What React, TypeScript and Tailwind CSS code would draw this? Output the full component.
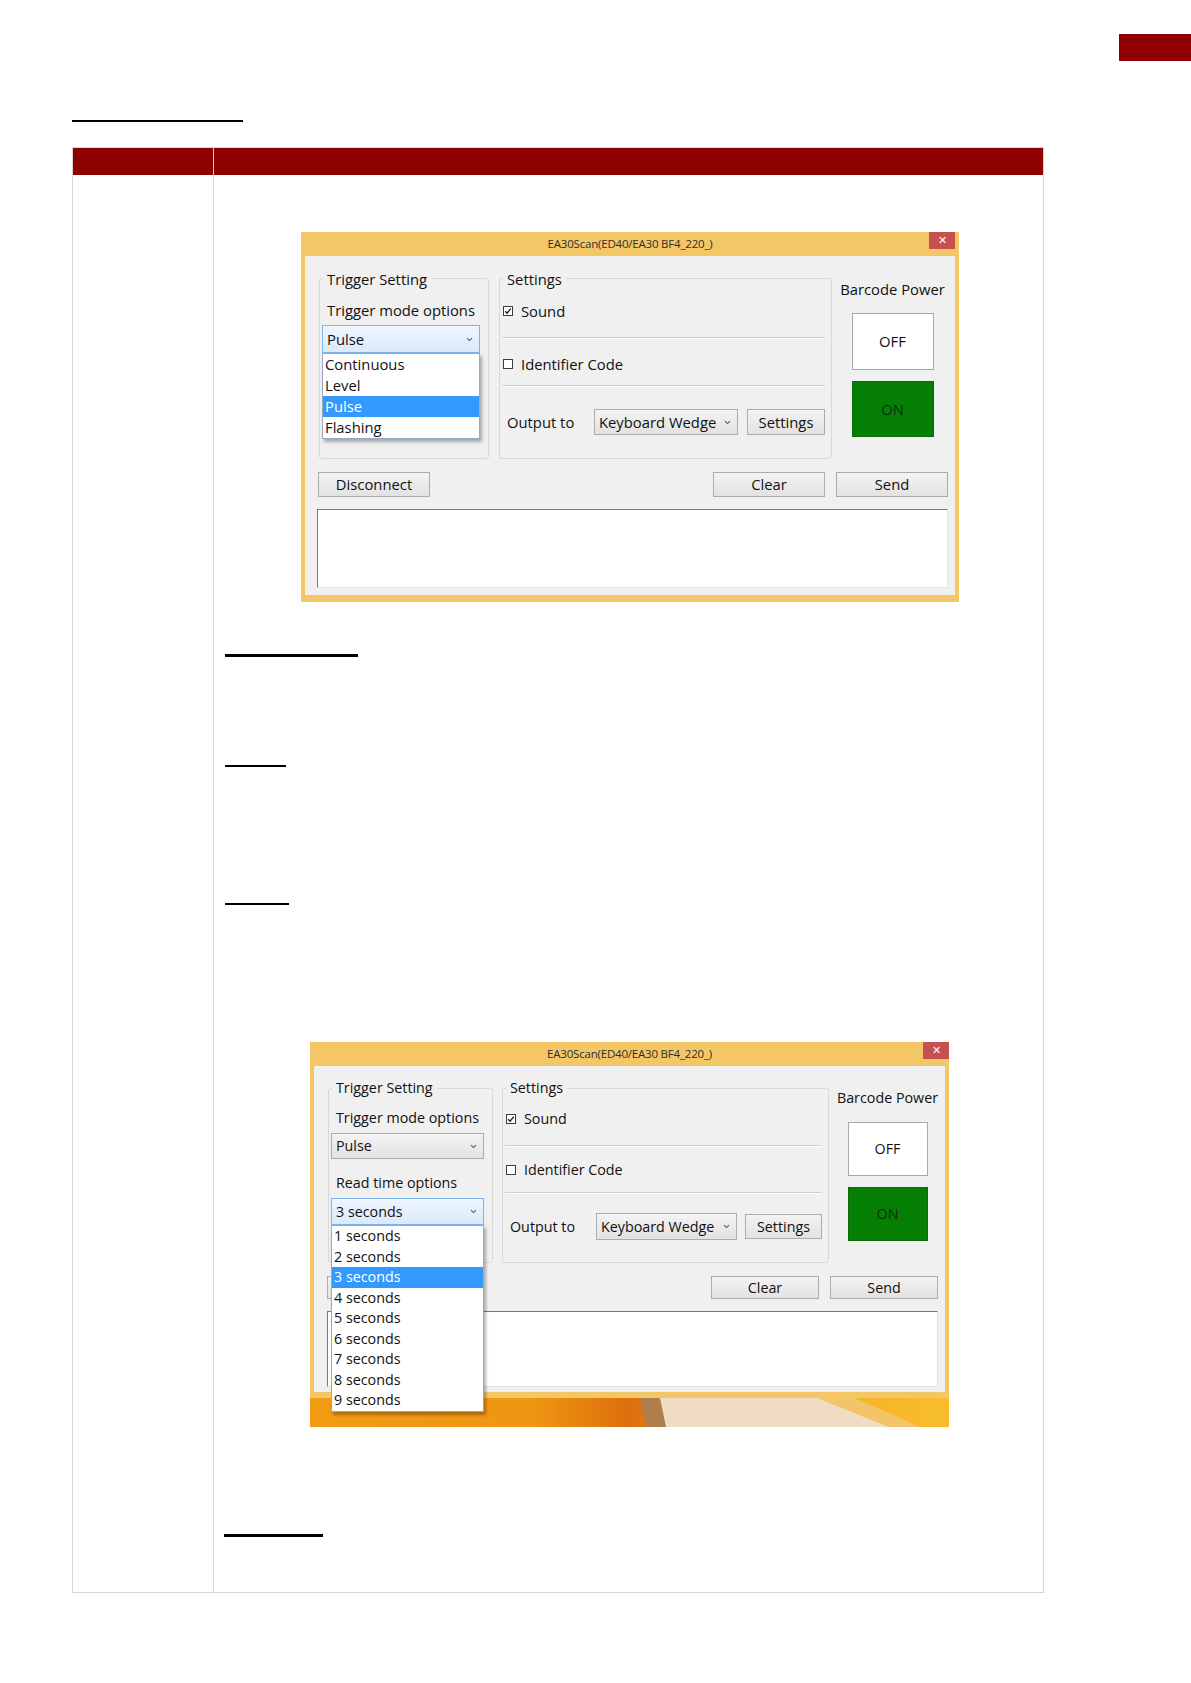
import type { ReactNode } from "react";

const ui = "font-['Open_Sans',sans-serif] text-[#111111]";

function Chevron() {
  return (
    <svg width="7" height="5" viewBox="0 0 7 5" className="shrink-0">
      <path d="M1 1.2 L3.5 3.6 L6 1.2" fill="none" stroke="#5a5a5a" strokeWidth="1.1" />
    </svg>
  );
}

function CheckBox({ checked }: { checked?: boolean }) {
  return (
    <svg width="10" height="10" viewBox="0 0 10 10" className="shrink-0">
      <rect x="0.5" y="0.5" width="9" height="9" fill="#fff" stroke="#3c3c3c" />
      {checked && (
        <path d="M2.2 5.2 L4.1 7.2 L7.8 2.6" fill="none" stroke="#1a1a1a" strokeWidth="1.3" />
      )}
    </svg>
  );
}

function Btn({ className, children }: { className: string; children?: ReactNode }) {
  return (
    <div
      className={`flex items-center justify-center border border-[#acacac] bg-linear-to-b from-[#f3f3f3] to-[#e2e2e2] ${className}`}
    >
      {children}
    </div>
  );
}

function Combo({
  value,
  focused,
  className,
  children,
}: {
  value: string;
  focused?: boolean;
  className: string;
  children?: ReactNode;
}) {
  return (
    <div
      className={`relative flex items-center justify-between pl-[4px] pr-[6px] border ${
        focused
          ? "border-[#7eb4ea] bg-linear-to-b from-[#eef6fe] to-[#d9eafb]"
          : "border-[#acacac] bg-linear-to-b from-[#f3f3f3] to-[#e2e2e2]"
      } ${className}`}
    >
      <span className="leading-[18px]">{value}</span>
      <Chevron />
      {children}
    </div>
  );
}

function DropList({
  items,
  selected,
  itemClass,
}: {
  items: string[];
  selected: string;
  itemClass: string;
}) {
  return (
    <div className="absolute left-[-1px] top-[calc(100%+1px)] z-10 w-[calc(100%+2px)] border border-[#97a9c4] bg-white shadow-[2px_3px_3px_rgba(0,0,0,0.3)]">
      {items.map((it) => (
        <div
          key={it}
          className={`pl-[2px] ${itemClass} ${it === selected ? "bg-[#3399ff] text-white" : ""}`}
        >
          {it}
        </div>
      ))}
    </div>
  );
}

function GroupBox({
  label,
  className,
  labelClass,
  children,
}: {
  label: string;
  className: string;
  labelClass: string;
  children?: ReactNode;
}) {
  return (
    <div className={`flex flex-col border border-[#d8d8d8] rounded-[3px] ${className}`}>
      <div className={`ml-[3px] w-fit bg-[#f0f0f0] px-[4px] leading-[20px] ${labelClass}`}>
        {label}
      </div>
      {children}
    </div>
  );
}

function Separator() {
  return <div className="ml-[2px] mr-[6px] h-[2px] border-t border-b border-t-[#cfcfcf] border-b-white" />;
}

function TitleBar({ closeClass }: { closeClass: string }) {
  return (
    <div className="grid h-[24px] grid-cols-[1fr_auto_1fr]">
      <div />
      <div className="self-center text-[11.5px] tracking-[-0.2px] text-[#2d2d2d]">
        EA30Scan(ED40/EA30 BF4_220_)
      </div>
      <div
        className={`justify-self-end flex h-[17px] w-[26px] items-center justify-center bg-[#c75050] text-[11px] text-white ${closeClass}`}
      >
        ✕
      </div>
    </div>
  );
}

function ScanDialogTrigger() {
  return (
    <div className={`w-[658px] bg-[#f4c766] pb-[7px] text-[14.8px] ${ui}`}>
      <TitleBar closeClass="mr-[4px]" />
      <div className="mx-[4px] h-[339px] bg-[#f0f0f0] pt-[22px]">
        <div className="flex items-start">
          <GroupBox label="Trigger Setting" labelClass="-mt-[10px]" className="ml-[14px] h-[181px] w-[170px]">
            <div className="ml-[7px] mt-[11px] leading-[20px]">Trigger mode options</div>
            <Combo value="Pulse" focused className="ml-[2px] mt-[5px] h-[28px] w-[158px]">
              <DropList
                items={["Continuous", "Level", "Pulse", "Flashing"]}
                selected="Pulse"
                itemClass="h-[21px] leading-[21px]"
              />
            </Combo>
          </GroupBox>

          <GroupBox label="Settings" labelClass="-mt-[10px]" className="ml-[10px] h-[181px] w-[333px]">
            <div className="ml-[3px] mt-[12px] flex items-center gap-[8px] leading-[20px]">
              <CheckBox checked />
              <span>Sound</span>
            </div>
            <div className="mt-[16px]">
              <Separator />
            </div>
            <div className="ml-[3px] mt-[15px] flex items-center gap-[8px] leading-[20px]">
              <CheckBox />
              <span>Identifier Code</span>
            </div>
            <div className="mt-[11px]">
              <Separator />
            </div>
            <div className="mt-[22px] flex h-[26px] items-center">
              <div className="ml-[7px] w-[87px]">Output to</div>
              <Combo value="Keyboard Wedge" className="h-[26px] w-[144px]" />
              <Btn className="ml-[9px] h-[26px] w-[78px]">Settings</Btn>
            </div>
          </GroupBox>

          <div className="ml-[9px] mt-[1px] flex w-[103px] flex-col items-center">
            <div className="whitespace-nowrap leading-[20px]">Barcode Power</div>
            <div className="mt-[14px] flex h-[57px] w-[82px] items-center justify-center border border-[#a8a8a8] bg-white">
              OFF
            </div>
            <div className="mt-[11px] flex h-[56px] w-[82px] items-center justify-center border border-[#0a6a0a] bg-[#058005] text-[#0b2e0b]">
              ON
            </div>
          </div>
        </div>

        <div className="mt-[13px] flex h-[25px]">
          <Btn className="ml-[13px] w-[112px]">Disconnect</Btn>
          <Btn className="ml-auto w-[112px]">Clear</Btn>
          <Btn className="ml-[11px] mr-[7px] w-[112px]">Send</Btn>
        </div>
        <div className="ml-[12px] mt-[12px] h-[79px] w-[631px] border border-[#e3e3e3] border-l-[#7a7a7a] border-t-[#7a7a7a] bg-white" />
      </div>
    </div>
  );
}

function Wallpaper() {
  return (
    <svg width="639" height="29" viewBox="0 0 639 29" className="block">
      <defs>
        <linearGradient id="wp" x1="0" x2="1" y1="0" y2="0">
          <stop offset="0" stopColor="#f29c14" />
          <stop offset="0.35" stopColor="#ef9612" />
          <stop offset="0.5" stopColor="#de6f0e" />
          <stop offset="0.7" stopColor="#f3ad22" />
          <stop offset="1" stopColor="#f7bd2c" />
        </linearGradient>
      </defs>
      <rect width="639" height="29" fill="url(#wp)" />
      <polygon points="330,0 350,0 356,29 336,29" fill="#b07e4c" />
      <polygon points="350,0 508,0 579,29 356,29" fill="#efdcc2" />
      <polygon points="508,0 545,0 610,29 579,29" fill="#f3c56a" />
    </svg>
  );
}

function ScanDialogReadTime() {
  const times = Array.from({ length: 9 }, (_, i) => `${i + 1} seconds`);
  return (
    <div className={`w-[639px] text-[14.3px] ${ui}`}>
      <div className="bg-[#f4c766] pb-[6px]">
        <TitleBar closeClass="mr-[0px]" />
        <div className="mx-[4px] h-[326px] bg-[#f0f0f0] pt-[22px]">
          <div className="flex items-start">
            <GroupBox label="Trigger Setting" labelClass="-mt-[11px]" className="ml-[14px] h-[175px] w-[165px]">
              <div className="ml-[7px] mt-[10px] leading-[20px]">Trigger mode options</div>
              <Combo value="Pulse" className="ml-[2px] mt-[5px] h-[26px] w-[153px]" />
              <div className="ml-[7px] mt-[14px] leading-[20px]">Read time options</div>
              <Combo value="3 seconds" focused className="ml-[2px] mt-[5px] h-[27px] w-[153px]">
                <DropList items={times} selected="3 seconds" itemClass="h-[20.5px] leading-[20.5px]" />
              </Combo>
            </GroupBox>

            <GroupBox label="Settings" labelClass="-mt-[11px]" className="ml-[9px] h-[175px] w-[327px]">
              <div className="ml-[3px] mt-[11px] flex items-center gap-[8px] leading-[20px]">
                <CheckBox checked />
                <span>Sound</span>
              </div>
              <div className="mt-[16px]">
                <Separator />
              </div>
              <div className="ml-[3px] mt-[13px] flex items-center gap-[8px] leading-[20px]">
                <CheckBox />
                <span>Identifier Code</span>
              </div>
              <div className="mt-[12px]">
                <Separator />
              </div>
              <div className="mt-[19px] flex h-[27px] items-center">
                <div className="ml-[7px] w-[86px]">Output to</div>
                <Combo value="Keyboard Wedge" className="h-[27px] w-[141px]" />
                <Btn className="ml-[8px] h-[25px] w-[77px]">Settings</Btn>
              </div>
            </GroupBox>

            <div className="ml-[7px] mt-[0px] flex w-[103px] flex-col items-center">
              <div className="whitespace-nowrap leading-[20px]">Barcode Power</div>
              <div className="mt-[14px] flex h-[54px] w-[80px] items-center justify-center border border-[#a8a8a8] bg-white">
                OFF
              </div>
              <div className="mt-[11px] flex h-[54px] w-[80px] items-center justify-center border border-[#0a6a0a] bg-[#058005] text-[#0b2e0b]">
                ON
              </div>
            </div>
          </div>

          <div className="mt-[13px] flex h-[23px]">
            <Btn className="ml-[13px] w-[108px]">Disconnect</Btn>
            <Btn className="ml-auto w-[108px]">Clear</Btn>
            <Btn className="ml-[11px] mr-[7px] w-[108px]">Send</Btn>
          </div>
          <div className="ml-[13px] mt-[12px] h-[76px] w-[611px] border border-[#e3e3e3] border-l-[#7a7a7a] border-t-[#7a7a7a] bg-white" />
        </div>
      </div>
      <Wallpaper />
    </div>
  );
}

export default function App() {
  return (
    <div className="min-h-[1683px] w-full bg-white">
      <div className="flex justify-end pt-[34px]">
        <div className="h-[27px] w-[72px] bg-[#8f0000]" />
      </div>

      <div className="ml-[72px] mt-[59px] h-[2px] w-[171px] bg-black" />

      <div className="ml-[72px] mt-[25px] w-[972px] border border-[#d6d6d6]">
        <div className="grid h-[27px] grid-cols-[141px_1fr] bg-[#8f0000]">
          <div className="border-r border-[#e6c4c4]" />
          <div />
        </div>
        <div className="grid h-[1417px] grid-cols-[141px_1fr]">
          <div className="border-r border-[#d6d6d6]" />
          <div className="flex flex-col items-start">
            <div className="ml-[87px] mt-[57px]">
              <ScanDialogTrigger />
            </div>
            <div className="ml-[11px] mt-[52px] h-[3px] w-[133px] bg-black" />
            <div className="ml-[11px] mt-[108px] h-[2px] w-[61px] bg-black" />
            <div className="ml-[11px] mt-[136px] h-[2px] w-[64px] bg-black" />
            <div className="ml-[96px] mt-[137px]">
              <ScanDialogReadTime />
            </div>
            <div className="ml-[10px] mt-[107px] h-[3px] w-[99px] bg-black" />
          </div>
        </div>
      </div>
    </div>
  );
}
